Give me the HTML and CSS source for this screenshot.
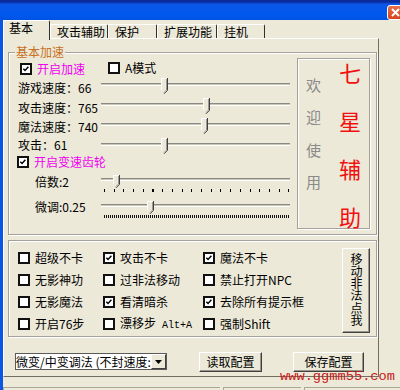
FILE: index.html
```html
<!DOCTYPE html>
<html>
<head>
<meta charset="utf-8">
<title>七星辅助</title>
<link rel="stylesheet" href="styles.css">
</head>
<body>
<div class="titlebar">
  <span class="close"><svg width="9" height="9" viewBox="0 0 9 9"><path d="M1 1 L8 8 M8 1 L1 8" stroke="#fff" stroke-width="2"/></svg></span>
</div>
<div class="frame">
  <div class="tabs">
    <div class="tab sel t1">基本</div>
    <div class="tab t2">攻击辅助</div>
    <div class="tab t3">保护</div>
    <div class="tab t4">扩展功能</div>
    <div class="tab t5">挂机</div>
  </div>
  <div class="panel">
    <div class="group g1">
      <span class="legend">基本加速</span>
      <div class="leftcol">
        <div class="row r1">
          <span class="cb on pink first"><i class="box"><svg viewBox="0 0 12 12"><path d="M2 5.5 L4.6 8.2 L9.6 2.8"/></svg></i>开启加速</span>
          <span class="cb amode"><i class="box"></i>A模式</span>
        </div>
        <div class="row r2">
          <span class="lbl">游戏速度：66</span>
          <div class="slider"><i class="track"></i><svg class="thumb" style="left:60px" width="7" height="16" viewBox="0 0 7 16"><path d="M0.5 12 L0.5 0.5 L5.5 0.5" fill="none" stroke="#fff"/><path d="M1 1 H5 V12 L3 14 L1 12 Z" fill="#ece9d8"/><path d="M6.5 0 V12.3 L3 15.8" fill="none" stroke="#404040"/><path d="M5.5 1 V12 L3 14.5" fill="none" stroke="#9a9a9a"/></svg></div>
        </div>
        <div class="row r3">
          <span class="lbl">攻击速度：765</span>
          <div class="slider"><i class="track"></i><svg class="thumb" style="left:102px" width="7" height="16" viewBox="0 0 7 16"><path d="M0.5 12 L0.5 0.5 L5.5 0.5" fill="none" stroke="#fff"/><path d="M1 1 H5 V12 L3 14 L1 12 Z" fill="#ece9d8"/><path d="M6.5 0 V12.3 L3 15.8" fill="none" stroke="#404040"/><path d="M5.5 1 V12 L3 14.5" fill="none" stroke="#9a9a9a"/></svg></div>
        </div>
        <div class="row r4">
          <span class="lbl">魔法速度：740</span>
          <div class="slider"><i class="track"></i><svg class="thumb" style="left:100px" width="7" height="16" viewBox="0 0 7 16"><path d="M0.5 12 L0.5 0.5 L5.5 0.5" fill="none" stroke="#fff"/><path d="M1 1 H5 V12 L3 14 L1 12 Z" fill="#ece9d8"/><path d="M6.5 0 V12.3 L3 15.8" fill="none" stroke="#404040"/><path d="M5.5 1 V12 L3 14.5" fill="none" stroke="#9a9a9a"/></svg></div>
        </div>
        <div class="row r5">
          <span class="lbl">攻击：61</span>
          <div class="slider"><i class="track"></i><svg class="thumb" style="left:60px" width="7" height="16" viewBox="0 0 7 16"><path d="M0.5 12 L0.5 0.5 L5.5 0.5" fill="none" stroke="#fff"/><path d="M1 1 H5 V12 L3 14 L1 12 Z" fill="#ece9d8"/><path d="M6.5 0 V12.3 L3 15.8" fill="none" stroke="#404040"/><path d="M5.5 1 V12 L3 14.5" fill="none" stroke="#9a9a9a"/></svg></div>
        </div>
        <div class="row r6">
          <span class="cb on pink gear"><i class="box"><svg viewBox="0 0 12 12"><path d="M2 5.5 L4.6 8.2 L9.6 2.8"/></svg></i>开启变速齿轮</span>
        </div>
        <div class="row r7">
          <span class="lbl sub">倍数:2</span>
          <div class="slider small"><i class="track"></i><i class="ticks wide"></i><svg class="thumb" style="left:12px" width="7" height="13" viewBox="0 0 7 13"><path d="M0.5 9 L0.5 0.5 L5.5 0.5" fill="none" stroke="#fff"/><path d="M1 1 H5 V9 L3 11 L1 9 Z" fill="#ece9d8"/><path d="M6.5 0 V9.3 L3 12.8" fill="none" stroke="#404040"/><path d="M5.5 1 V9 L3 11.5" fill="none" stroke="#9a9a9a"/></svg></div>
        </div>
        <div class="row r8">
          <span class="lbl sub">微调:0.25</span>
          <div class="slider small"><i class="track"></i><i class="ticks dense"></i><svg class="thumb" style="left:46px" width="7" height="13" viewBox="0 0 7 13"><path d="M0.5 9 L0.5 0.5 L5.5 0.5" fill="none" stroke="#fff"/><path d="M1 1 H5 V9 L3 11 L1 9 Z" fill="#ece9d8"/><path d="M6.5 0 V9.3 L3 12.8" fill="none" stroke="#404040"/><path d="M5.5 1 V9 L3 11.5" fill="none" stroke="#9a9a9a"/></svg></div>
        </div>
      </div>
      <div class="welcome">
        <div class="wcol gray"><span>欢</span><span>迎</span><span>使</span><span>用</span></div>
        <div class="wcol red"><span>七</span><span>星</span><span>辅</span><span>助</span></div>
      </div>
    </div>

    <div class="group g2">
      <div class="opts">
        <span class="cb"><i class="box"></i>超级不卡</span>
        <span class="cb on"><i class="box"><svg viewBox="0 0 12 12"><path d="M2 5.5 L4.6 8.2 L9.6 2.8"/></svg></i>攻击不卡</span>
        <span class="cb on"><i class="box"><svg viewBox="0 0 12 12"><path d="M2 5.5 L4.6 8.2 L9.6 2.8"/></svg></i>魔法不卡</span>
        <span class="cb"><i class="box"></i>无影神功</span>
        <span class="cb"><i class="box"></i>过非法移动</span>
        <span class="cb"><i class="box"></i>禁止打开NPC</span>
        <span class="cb"><i class="box"></i>无影魔法</span>
        <span class="cb on"><i class="box"><svg viewBox="0 0 12 12"><path d="M2 5.5 L4.6 8.2 L9.6 2.8"/></svg></i>看清暗杀</span>
        <span class="cb on"><i class="box"><svg viewBox="0 0 12 12"><path d="M2 5.5 L4.6 8.2 L9.6 2.8"/></svg></i>去除所有提示框</span>
        <span class="cb"><i class="box"></i>开启76步</span>
        <span class="cb"><i class="box"></i><span>漂移步<span class="mono">Alt+A</span></span></span>
        <span class="cb"><i class="box"></i>强制Shift</span>
      </div>
      <button class="vbtn"><span class="vtext">移动非法点我</span></button>
    </div>

    <div class="bottom">
      <div class="combo"><span class="ctext">微变/中变调法 (不封速度:</span><span class="drop"><svg width="7" height="4" viewBox="0 0 7 4"><path d="M0 0 H7 L3.5 4 Z" fill="#000"/></svg></span></div>
      <button class="btn b1">读取配置</button>
      <button class="btn b2">保存配置</button>
    </div>
  </div>
  <div class="status">
    <span class="sp s1"></span><span class="sp s2"></span><span class="sp s3"></span>
  </div>
</div>
<div class="watermark">www.ggmm55.com</div>
</body>
</html>
```
FILE: styles.css
```css
* { box-sizing: border-box; margin: 0; padding: 0; }
html, body { width: 400px; height: 390px; overflow: hidden; }
body {
  background: #ece9d8;
  font-family: "Noto Sans CJK SC", "Liberation Sans", sans-serif;
  font-size: 12px;
  color: #000;
  position: relative;
}

.titlebar {
  height: 20px;
  background: linear-gradient(#0a2b9c 0, #0a2b9c 2px, #0b56e6 4px, #0058ee 15px, #0052e2 20px);
  position: relative;
}
.close {
  position: absolute;
  left: 387px;
  top: 5px;
  width: 16px;
  height: 15px;
  background: linear-gradient(#e8714e, #d4421c);
  border: 1px solid #fff;
  border-radius: 3px;
  display: flex;
  align-items: center;
  justify-content: center;
}

.frame {
  border-left: 3px solid #0b57e4;
  height: 370px;
}

.tabs {
  display: flex;
  align-items: flex-end;
  height: 18px;
  position: relative;
  z-index: 2;
}
.tab {
  height: 14px;
  line-height: 13px;
  padding-left: 6px;
  background: #ece9d8;
  border-top: 1px solid #fff;
  border-left: 1px solid #fff;
  border-right: 1px solid #303030;
  border-radius: 2px 2px 0 0;
  white-space: nowrap;
}
.tab.sel {
  height: 20px;
  margin-bottom: -2px;
  line-height: 14px;
  padding-left: 5px;
}
.t1 { width: 47px; }
.t2 { width: 58px; }
.t3 { width: 49px; }
.t4 { width: 60px; }
.t5 { width: 48px; }

.panel {
  width: 376px;
  height: 339px;
  border-top: 1px solid #fff;
  border-left: 1px solid #fff;
  border-right: 1px solid #716f64;
  border-bottom: 1px solid #716f64;
  position: relative;
  z-index: 1;
}

.group {
  position: relative;
  width: 369px;
  margin-left: 4px;
  border: 1px solid #a3a29a;
  box-shadow: inset 1px 1px 0 #fff, 1px 1px 0 #fff;
}
.g1 {
  margin-top: 13px;
  height: 183px;
  display: flex;
  align-items: flex-start;
}
.legend {
  position: absolute;
  left: 6px;
  top: -8px;
  padding: 0 1px;
  line-height: 14px;
  background: #ece9d8;
  color: #c8701e;
}

.leftcol {
  width: 288px;
  padding: 7px 0 0 9px;
}
.row {
  display: flex;
  align-items: flex-start;
}
.lbl {
  width: 83px;
  white-space: nowrap;
}
.lbl.sub { padding-left: 17px; line-height: 22px; }
.r1 { height: 18px; align-items: center; }
.r2 { height: 20px; }
.r2 .lbl { line-height: 20px; }
.r3 { height: 19px; }
.r3 .lbl { line-height: 19px; }
.r4 { height: 19px; }
.r4 .lbl { line-height: 19px; }
.r4 .slider { margin-top: 1px; }
.r5 { height: 17px; }
.r5 .lbl { line-height: 17px; }
.r5 .slider { margin-top: 2px; }
.r6 { height: 18px; align-items: center; }
.r7 { height: 25px; }
.r7 .slider { margin-top: 4px; }
.r8 { height: 25px; }
.r8 .slider { margin-top: 5px; }

.slider {
  position: relative;
  width: 189px;
  height: 16px;
}
.track {
  position: absolute;
  left: 0;
  right: 0;
  top: 5px;
  height: 3px;
  border-top: 1px solid #8a8a84;
  border-bottom: 1px solid #fff;
  background: #c9c6b6;
}
.slider.small { height: 20px; }
.slider.small .track { top: 3px; }
.thumb {
  position: absolute;
  top: 0;
}
.ticks {
  position: absolute;
  left: 3px;
  width: 186px;
  top: 14px;
}
.ticks.wide {
  height: 3px;
  background: repeating-linear-gradient(to right, #000 0, #000 1px, transparent 1px, transparent 9.7px);
}
.ticks.dense {
  height: 3px;
  background: repeating-linear-gradient(to right, #111 0, #111 1px, transparent 1px, transparent 2px);
}

.cb {
  display: inline-flex;
  align-items: center;
  gap: 5px;
  white-space: nowrap;
  line-height: 14px;
}
.box {
  width: 12px;
  height: 12px;
  border: 2px solid #111;
  background: #fff;
  display: inline-flex;
  flex: none;
}
.box svg {
  width: 8px;
  height: 8px;
}
.box svg path {
  fill: none;
  stroke: #000;
  stroke-width: 2.2;
}
.pink { color: #f000f0; }
.first { margin-left: 2px; }
.amode { margin-left: 23px; margin-top: -3px; }
.gear { margin-left: -1px; }

.welcome {
  width: 73px;
  height: 171px;
  margin-top: 5px;
  border: 1px solid #a3a29a;
  box-shadow: inset 1px 1px 0 #fff, 1px 1px 0 #fff;
  display: flex;
  padding-left: 8px;
}
.wcol {
  display: flex;
  flex-direction: column;
}
.wcol.gray {
  width: 15px;
  font-size: 15px;
  line-height: 16px;
  color: #8a8a8a;
  gap: 16.3px;
  padding-top: 18px;
}
.wcol.red {
  width: 22px;
  margin-left: 18px;
  font-size: 22px;
  line-height: 24px;
  color: #f01010;
  justify-content: space-between;
  height: 169px;
  padding-top: 1px;
}

.g2 {
  margin-top: 5px;
  height: 97px;
  display: flex;
  align-items: flex-start;
}
.opts {
  display: grid;
  grid-template-columns: 85px 100px 139px;
  grid-auto-rows: 22px;
  padding: 6px 0 0 9px;
  align-items: center;
}
.mono {
  font-family: "Liberation Mono", monospace;
  font-size: 10px;
  margin-left: 6px;
}
.vbtn, .btn {
  background: #ece9d8;
  border-top: 1px solid #fff;
  border-left: 1px solid #fff;
  border-right: 1px solid #404040;
  border-bottom: 1px solid #404040;
  box-shadow: inset -1px -1px 0 #9a988c;
  font-family: inherit;
  font-size: 12px;
  color: #000;
}
.vbtn {
  width: 28px;
  height: 85px;
  margin-top: 7px;
  display: flex;
  align-items: center;
  justify-content: center;
  padding-bottom: 2px;
}
.vtext {
  writing-mode: vertical-rl;
  text-orientation: upright;
  letter-spacing: 0.3px;
  line-height: 14px;
}

.bottom {
  display: flex;
  align-items: flex-start;
  padding: 15px 0 0 11px;
}
.combo {
  width: 152px;
  height: 17px;
  margin-top: 1px;
  background: #fff;
  border: 1px solid #5a5a5a;
  display: flex;
  align-items: center;
  overflow: hidden;
}
.ctext {
  flex: 1;
  overflow: hidden;
  white-space: nowrap;
  line-height: 15px;
}
.drop {
  width: 15px;
  height: 15px;
  flex: none;
  background: #ece9d8;
  border-top: 1px solid #fff;
  border-left: 1px solid #fff;
  border-right: 1px solid #404040;
  border-bottom: 1px solid #404040;
  display: flex;
  align-items: center;
  justify-content: center;
}
.btn {
  height: 20px;
  line-height: 18px;
}
.b1 { width: 63px; margin-left: 32px; }
.b2 { width: 71px; margin-left: 31px; }

.status {
  display: flex;
  margin-top: 10px;
  height: 3px;
}
.sp {
  height: 3px;
  border-top: 1px solid #aca899;
  border-left: 1px solid #aca899;
}
.s1 { width: 217px; }
.s2 { width: 78px; margin-left: 3px; }
.s3 { flex: 1; margin-left: 3px; }

.watermark {
  position: absolute;
  left: 280px;
  top: 371px;
  z-index: 5;
  font-family: "Liberation Mono", monospace;
  font-size: 13.7px;
  line-height: 12px;
  color: #c81818;
  white-space: nowrap;
}
```
